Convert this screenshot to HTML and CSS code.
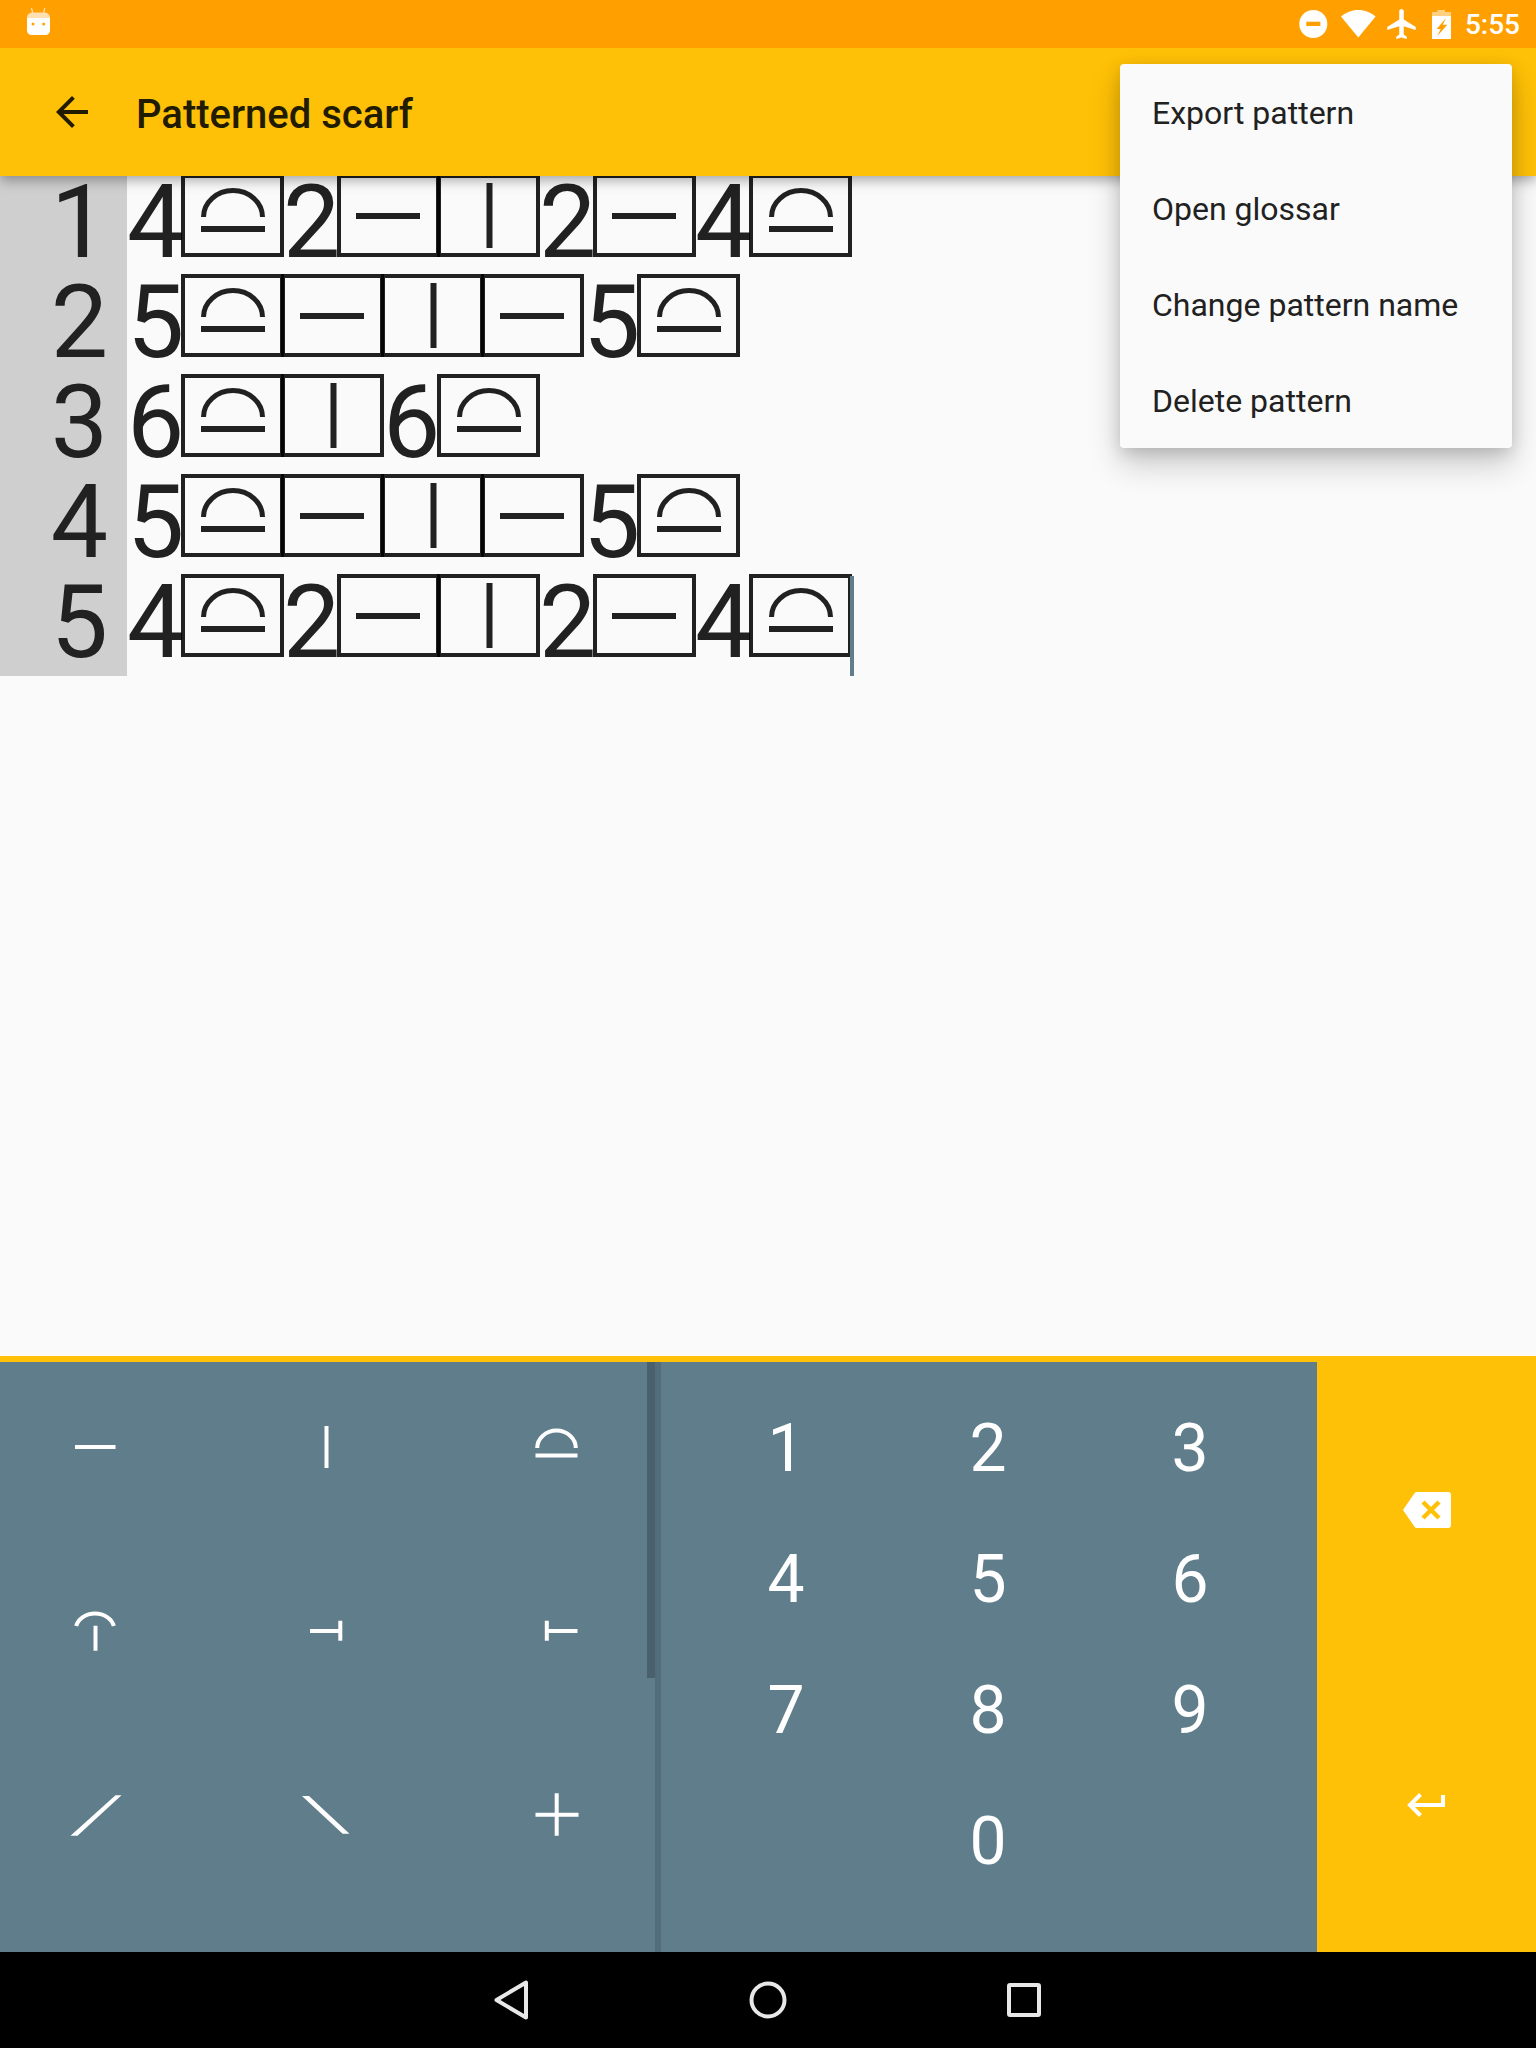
FILE: index.html
```html
<!DOCTYPE html>
<html lang="en">
<head>
    <meta charset="UTF-8">
    <title>Patterned scarf</title>
    <link rel="stylesheet" href="styles.css">
</head>
<body>
<!-- stitch symbols used in the pattern rows -->
<svg class="defs">
    <symbol id="st-arch" viewBox="0 0 103 83">
        <rect class="st-frame" x="2" y="2" width="99" height="79"/>
        <path class="st-mark" d="M22.5 43A29.5 26.5 0 0 1 81.5 43"/>
        <path class="st-mark st-thick" d="M20 55H84"/>
    </symbol>
    <symbol id="st-dash" viewBox="0 0 103 83">
        <rect class="st-frame" x="2" y="2" width="99" height="79"/>
        <path class="st-mark st-thick" d="M19 42H83"/>
    </symbol>
    <symbol id="st-bar" viewBox="0 0 103 83">
        <rect class="st-frame" x="2" y="2" width="99" height="79"/>
        <path class="st-mark st-thick" d="M52.500 9V74"/>
    </symbol>
</svg>

<div class="statusbar">
    <svg class="st-android" width="23" height="27" viewBox="0 0 23 27">
        <path d="M4.5 0L5.8 5M17.8 0L16.6 5" stroke="#ffe0b2" stroke-width="1.2" fill="none"/>
        <path d="M0 10C0 6 3 4.6 6 4.6H17C20 4.6 23 6 23 10V9.5H0z" fill="#ffe0b2"/>
        <path d="M0 9.5H23V22C23 25.5 21 27 18 27H5C2 27 0 25.5 0 22z" fill="#fff"/>
        <circle cx="6" cy="16" r="1.5" fill="#ffa000"/>
        <circle cx="16.7" cy="16" r="1.5" fill="#ffa000"/>
    </svg>
    <div class="status-right">
        <svg width="29" height="28" viewBox="0 0 29 28">
            <circle cx="14.3" cy="14" r="14" fill="#fff"/>
            <rect x="7.3" y="11.700" width="14" height="4.300" fill="#ffa000"/>
        </svg>
        <svg class="ic-wifi" width="35" height="28" viewBox="0 0 35 28">
            <path d="M17.3 0C10.5 0 5 2.4 0 6.5L17.3 27.5 34.6 6.5C29.6 2.4 24 0 17.3 0z" fill="#fff"/>
        </svg>
        <svg class="ic-plane" width="29" height="30" viewBox="2 2 19 20">
            <path d="M21 16v-2l-8-5V3.5c0-.83-.67-1.5-1.5-1.5S10 2.67 10 3.5V9l-8 5v2l8-2.5V19l-2 1.5V22l3.5-1 3.5 1v-1.5L13 19v-5.5l8 2.5z" fill="#fff"/>
        </svg>
        <svg class="ic-battery" width="19" height="29" viewBox="0 0 19 29">
            <path d="M5.3 0H13V2H19V6H0V2H5.3z" fill="#fff" opacity=".5"/>
            <rect y="6" width="19" height="23" fill="#fff"/>
            <path d="M14 8L4.7 19H8.7L5.3 26 15.3 14.7H10.7z" fill="#ffa000"/>
        </svg>
        <span class="clock">5:55</span>
    </div>
</div>

<div class="toolbar">
    <svg class="back" width="48" height="48" viewBox="0 0 24 24">
        <path d="M20 11H7.83l5.59-5.59L12 4l-8 8 8 8 1.41-1.41L7.83 13H20v-2z"/>
    </svg>
    <h1 class="title">Patterned scarf</h1>
</div>

<div class="menu">
    <div class="menu-item">Export pattern</div>
    <div class="menu-item">Open glossar</div>
    <div class="menu-item">Change pattern name</div>
    <div class="menu-item">Delete pattern</div>
</div>

<div class="editor">
    <div class="row">
        <span class="line-no">1</span>
        <div class="cells">
            <span class="num">4</span><svg class="stitch"><use href="#st-arch"/></svg>
            <span class="num">2</span><svg class="stitch"><use href="#st-dash"/></svg><svg class="stitch"><use href="#st-bar"/></svg>
            <span class="num">2</span><svg class="stitch"><use href="#st-dash"/></svg>
            <span class="num">4</span><svg class="stitch"><use href="#st-arch"/></svg>
        </div>
    </div>
    <div class="row">
        <span class="line-no">2</span>
        <div class="cells">
            <span class="num">5</span><svg class="stitch"><use href="#st-arch"/></svg><svg class="stitch"><use href="#st-dash"/></svg><svg class="stitch"><use href="#st-bar"/></svg><svg class="stitch"><use href="#st-dash"/></svg>
            <span class="num">5</span><svg class="stitch"><use href="#st-arch"/></svg>
        </div>
    </div>
    <div class="row">
        <span class="line-no">3</span>
        <div class="cells">
            <span class="num">6</span><svg class="stitch"><use href="#st-arch"/></svg><svg class="stitch"><use href="#st-bar"/></svg>
            <span class="num">6</span><svg class="stitch"><use href="#st-arch"/></svg>
        </div>
    </div>
    <div class="row">
        <span class="line-no">4</span>
        <div class="cells">
            <span class="num">5</span><svg class="stitch"><use href="#st-arch"/></svg><svg class="stitch"><use href="#st-dash"/></svg><svg class="stitch"><use href="#st-bar"/></svg><svg class="stitch"><use href="#st-dash"/></svg>
            <span class="num">5</span><svg class="stitch"><use href="#st-arch"/></svg>
        </div>
    </div>
    <div class="row">
        <span class="line-no">5</span>
        <div class="cells">
            <span class="num">4</span><svg class="stitch"><use href="#st-arch"/></svg>
            <span class="num">2</span><svg class="stitch"><use href="#st-dash"/></svg><svg class="stitch"><use href="#st-bar"/></svg>
            <span class="num">2</span><svg class="stitch"><use href="#st-dash"/></svg>
            <span class="num">4</span><svg class="stitch"><use href="#st-arch"/></svg>
            <span class="cursor"></span>
        </div>
    </div>
</div>

<div class="keyboard">
    <div class="stitch-pad">
        <svg class="key" viewBox="0 0 80 80"><path d="M20 40H60.5"/></svg>
        <svg class="key" viewBox="0 0 80 80"><path d="M40.5 19V61"/></svg>
        <svg class="key" viewBox="0 0 80 80"><path d="M20.2 41A19.2 17.3 0 0 1 58.8 41M18.5 48.5H60.5"/></svg>
        <svg class="key" viewBox="0 0 80 80"><path d="M21.2 35A19.2 15.6 0 0 1 58.8 35M40.5 34.7V59.7"/></svg>
        <svg class="key" viewBox="0 0 80 80"><path d="M24 40H56M54.3 29.7V49.7"/></svg>
        <svg class="key" viewBox="0 0 80 80"><path d="M29.8 29.7V49.7M29.8 40H60.5"/></svg>
        <svg class="key" viewBox="0 0 80 80"><polygon class="solid" points="15.5,60.7 22.5,60.7 66.5,20.3 60.5,20.3"/></svg>
        <svg class="key" viewBox="0 0 80 80"><polygon class="solid" points="16,21 23,21 63.5,58.7 56.6,58.7"/></svg>
        <svg class="key" viewBox="0 0 80 80"><path d="M18.5 39.7H61.5M39.7 18.3V60.7"/></svg>
        <div class="pad-scroll"></div>
    </div>
    <div class="num-pad">
        <span class="num-key">1</span>
        <span class="num-key">2</span>
        <span class="num-key">3</span>
        <span class="num-key">4</span>
        <span class="num-key">5</span>
        <span class="num-key">6</span>
        <span class="num-key">7</span>
        <span class="num-key">8</span>
        <span class="num-key">9</span>
        <span class="num-key zero">0</span>
    </div>
    <div class="actions">
        <div class="action">
            <svg width="48" height="36" viewBox="0 0 48 36">
                <path d="M14 0H45A3 3 0 0 1 48 3V33A3 3 0 0 1 45 36H14A3 3 0 0 1 11.5 34.7L0 18 11.5 1.3A3 3 0 0 1 14 0z" fill="#fff"/>
                <path d="M20 10L36 26M36 10L20 26" stroke="#ffc107" stroke-width="4.5" fill="none"/>
            </svg>
        </div>
        <div class="action">
            <svg class="ic-enter" width="38" height="24" viewBox="0 0 38 24">
                <path d="M36 2V12H3M13.5 1.5L3 12 13.5 22.5" stroke="#fff" stroke-width="4" fill="none"/>
            </svg>
        </div>
    </div>
</div>

<div class="navbar">
    <div class="nav-btn">
        <svg width="36" height="40" viewBox="0 0 36 40"><path d="M32 2.5V37.500L2.500 20z"/></svg>
    </div>
    <div class="nav-btn">
        <svg width="40" height="40" viewBox="0 0 40 40"><circle cx="20" cy="20" r="16.500"/></svg>
    </div>
    <div class="nav-btn">
        <svg width="36" height="36" viewBox="0 0 36 36"><rect x="3" y="3" width="30" height="30" rx="1"/></svg>
    </div>
</div>
</body>
</html>
```

FILE: styles.css
```css
* {
    box-sizing: border-box;
}

body {
    margin: 0;
    width: 1536px;
    height: 2048px;
    position: relative;
    overflow: hidden;
    display: flex;
    flex-direction: column;
    font-family: Roboto, "Liberation Sans", sans-serif;
    background: #fafafa;
}

.defs {
    display: none;
}

/* status bar */
.statusbar {
    height: 48px;
    flex: none;
    background: #ffa000;
    display: flex;
    align-items: center;
    justify-content: space-between;
    padding: 0 16px 0 27px;
    position: relative;
    z-index: 3;
}

.st-android {
    margin-top: -5px;
}

.status-right {
    display: flex;
    align-items: center;
}

.ic-wifi {
    margin-left: 13px;
}

.ic-plane {
    margin-left: 11px;
}

.ic-battery {
    margin-left: 16px;
}

.clock {
    color: #fff;
    font-size: 28px;
    font-weight: 500;
    margin-left: 14px;
}

/* toolbar */
.toolbar {
    height: 128px;
    flex: none;
    background: #ffc107;
    display: flex;
    align-items: center;
    padding-left: 48px;
    position: relative;
    z-index: 2;
    box-shadow: 0 4px 12px rgba(0, 0, 0, 0.35);
}

.back {
    fill: #211b00;
}

.title {
    margin: 4px 0 0 40px;
    font-size: 40px;
    font-weight: 500;
    color: #211b00;
}

/* overflow menu */
.menu {
    position: absolute;
    left: 1120px;
    top: 64px;
    width: 392px;
    background: #fafafa;
    border-radius: 4px;
    z-index: 4;
    box-shadow: 0 16px 32px rgba(0, 0, 0, 0.2), 0 4px 16px rgba(0, 0, 0, 0.14);
}

.menu-item {
    height: 96px;
    line-height: 98px;
    padding-left: 32px;
    font-size: 32px;
    color: #212121;
}

/* pattern rows */
.editor {
    flex: 1;
    background: #fafafa;
}

.row {
    display: flex;
    height: 100px;
}

.line-no {
    width: 127px;
    flex: none;
    background: #cfcfcf;
    text-align: right;
    padding-right: 19px;
    font-size: 102px;
    line-height: 92px;
    color: #212121;
}

.cells {
    display: flex;
    align-items: flex-start;
    margin-left: -2px;
    height: 100px;
}

.num {
    font-size: 102px;
    line-height: 92px;
    padding-left: 2px;
    letter-spacing: -3.3px;
    color: #212121;
}

.stitch {
    width: 103px;
    height: 83px;
    margin-top: -2px;
    margin-right: -3px;
    flex: none;
}

.st-frame,
.st-mark {
    fill: none;
    stroke: rgba(0, 0, 0, 0.87);
    stroke-width: 4;
}

.st-mark {
    stroke-width: 5;
}

.st-thick {
    stroke-width: 6;
}

.cursor {
    width: 4px;
    height: 100px;
    margin-left: 1px;
    background: #607d8b;
    flex: none;
}

/* keyboard */
.keyboard {
    height: 596px;
    flex: none;
    display: flex;
    border-top: 6px solid #ffc107;
    background: #607d8b;
}

.stitch-pad {
    width: 655px;
    flex: none;
    position: relative;
    display: grid;
    grid-template-columns: repeat(3, 80px);
    grid-auto-rows: 184px;
    column-gap: 151px;
    padding-left: 54.5px;
}

.key {
    width: 80px;
    height: 80px;
    margin-top: 45px;
    fill: none;
    stroke: #fff;
    stroke-width: 4;
}

.key .solid {
    fill: #fff;
    stroke: none;
}

.pad-scroll {
    position: absolute;
    left: 647px;
    top: 0;
    width: 8px;
    height: 316px;
    background: #4a606c;
}

.num-pad {
    flex: 1;
    border-left: 6px solid #526c79;
    display: grid;
    grid-template-columns: repeat(3, 202px);
    grid-auto-rows: 131px;
    padding: 21px 0 0 24px;
}

.num-key {
    text-align: center;
    line-height: 131px;
    font-size: 66px;
    color: #fff;
}

.zero {
    grid-column: 2;
}

.actions {
    width: 219px;
    flex: none;
    background: #ffc107;
    margin-top: -6px;
    padding-top: 6px;
    display: flex;
    flex-direction: column;
}

.action {
    flex: 1;
    display: flex;
    align-items: center;
    justify-content: center;
}

.ic-enter {
    margin-left: -2px;
}

/* nav bar */
.navbar {
    height: 96px;
    flex: none;
    background: #000;
    display: flex;
    justify-content: center;
}

.nav-btn {
    width: 256px;
    display: flex;
    align-items: center;
    justify-content: center;
}

.nav-btn svg {
    fill: none;
    stroke: #e8e8e8;
    stroke-width: 4;
    stroke-linejoin: round;
}
```
